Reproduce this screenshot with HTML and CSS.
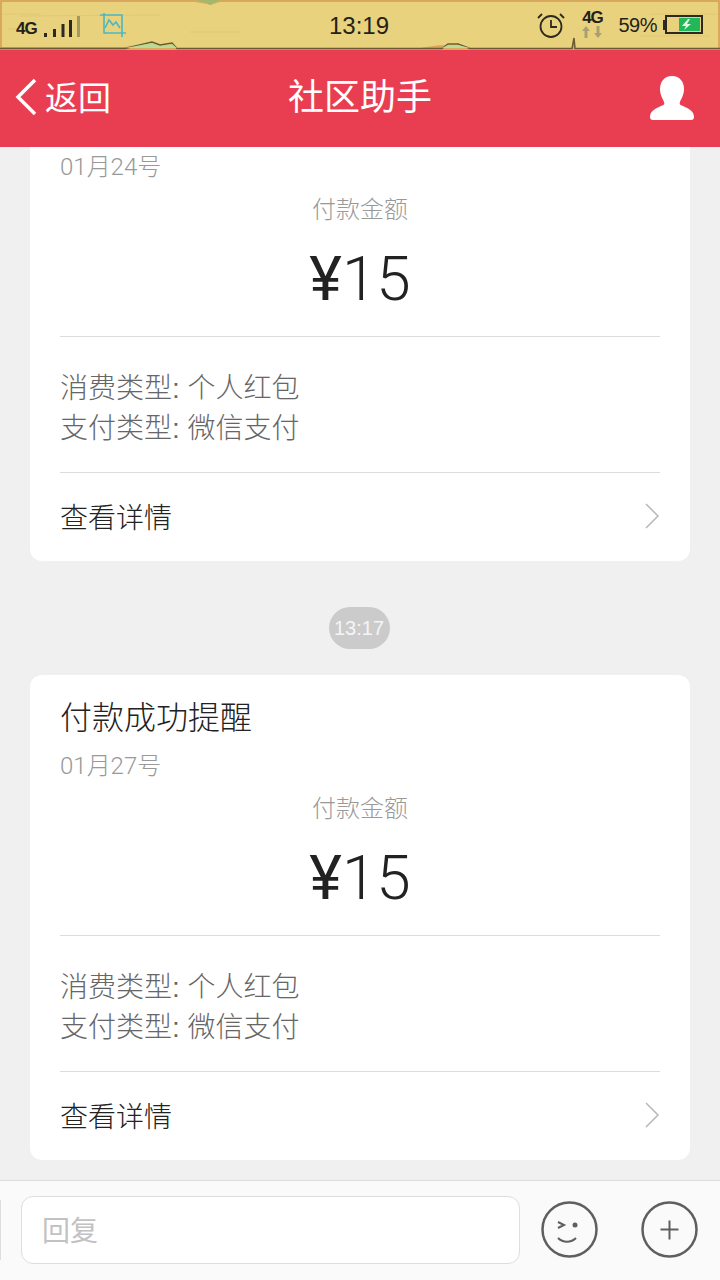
FILE: index.html
```html
<!DOCTYPE html>
<html lang="zh">
<head>
<meta charset="utf-8">
<title>社区助手</title>
<link rel="stylesheet" href="styles.css">
</head>
<body>
<div class="app">
  <div class="status">
    <svg class="wood" width="720" height="50" viewBox="0 0 720 50">
      <rect width="720" height="50" fill="#d9a860"/>
      <path d="M2 2H195L207 4 210 5 220 2H718V48H575L574 38 572 48H470L452 46 440 45 420 48H176L172 43 160 45 152 42 125 47H2Z" fill="#e9d27e"/>
      <path d="M0 48.500H125L152 42 160 45 172 43 177 48.500H442L448 44 458 44 470 48.500H572L574 38 575 48.500H720" fill="none" stroke="#6b5a33" stroke-width="1.500"/>
      <path d="M125 48L152 43 160 46 172 44 177 48ZM442 48L448 45 458 45 470 48Z" fill="#b9dc92"/>
      <path d="M195 0L207 3 210 5 220 0Z" fill="#a3b86b"/>
      <path d="M2 14H40M190 32H240M650 14H718M8 29H20M20 16L160 15M640 36H710" stroke="#d8b36b" stroke-width="1" opacity=".35"/>
    </svg>
    <div class="status-left">
      <span class="net">4G</span>
      <svg class="bars" width="36" height="22" viewBox="0 0 36 22">
        <path d="M0 17h3v4H0zM9 13h3v8H9zM17.500 8h3v13h-3zM25 4h3v17h-3z" fill="#2c2a20"/>
        <path d="M33 0h3v21h-3z" fill="#2c2a20" opacity=".35"/>
      </svg>
      <svg class="shot" width="26" height="24" viewBox="0 0 26 24" fill="none" stroke="#4cb6c4" stroke-width="1.600">
        <path d="M0 2h22v18M4 0v20h22M22 20v4"/>
        <path d="M5 15l4-8 4 5 3-3 4 6"/>
      </svg>
    </div>
    <span class="clock">13:19</span>
    <div class="status-right">
      <svg class="alarm" width="28" height="28" viewBox="0 0 28 28" fill="none" stroke="#2c2a20" stroke-width="1.800">
        <circle cx="14" cy="15.500" r="10.500"/>
        <path d="M14 9v7h6M1 7l4-4M27 7l-4-4"/>
      </svg>
      <div class="net-up">
        <span class="net-label">4G</span>
        <svg width="20" height="12" viewBox="0 0 20 12" fill="#a8a070"><path d="M4 0l4 5H5.500v7h-3V5H0zM16 12l-4-5h2.500V0h3v7H20z"/></svg>
      </div>
      <span class="percent">59%</span>
      <svg width="40" height="20" viewBox="0 0 40 20">
        <rect x="0" y="5" width="2" height="10" fill="#2c2a20"/>
        <rect x="3" y="1" width="36" height="17" fill="none" stroke="#2c2a20" stroke-width="2"/>
        <rect x="16" y="3" width="21" height="13" fill="#22b85a"/>
        <path d="M25 4l-6 7h4l-2 4 7-6h-4l3-5z" fill="#e9f5e0"/>
      </svg>
    </div>
  </div>

  <header class="bar">
    <div class="back">
      <svg class="back-icon" width="24" height="38" viewBox="0 0 24 38" fill="none" stroke="#fff" stroke-width="3.500"><path d="M21 2L4 19l17 17"/></svg>
      <span>返回</span>
    </div>
    <h1 class="title">社区助手</h1>
    <div class="user-slot">
      <svg class="user" width="46" height="46" viewBox="0 0 46 46" fill="#fff">
        <path d="M23 1c8 0 12 6 12 13 0 6-3 10-4 13-1 2 0 3 3 4 7 3 11 6 11 11 0 2-1 3-3 3H4c-2 0-3-1-3-3 0-5 4-8 11-11 3-1 4-2 3-4-1-3-4-7-4-13C11 7 15 1 23 1z"/>
      </svg>
    </div>
  </header>

  <main class="feed">
    <article class="card card-cut">
      <div class="date">01月24号</div>
      <div class="amount-label">付款金额</div>
      <div class="amount"><span class="yen">¥</span>15</div>
      <div class="info">消费类型: 个人红包<br>支付类型: 微信支付</div>
      <div class="more">
        <span>查看详情</span>
        <svg width="16" height="26" viewBox="0 0 16 26" fill="none" stroke="#b8b8b8" stroke-width="1.500"><path d="M2 1l12 12L2 25"/></svg>
      </div>
    </article>

    <div class="time-row"><span class="time">13:17</span></div>

    <article class="card">
      <div class="card-title">付款成功提醒</div>
      <div class="date">01月27号</div>
      <div class="amount-label">付款金额</div>
      <div class="amount"><span class="yen">¥</span>15</div>
      <div class="info">消费类型: 个人红包<br>支付类型: 微信支付</div>
      <div class="more">
        <span>查看详情</span>
        <svg width="16" height="26" viewBox="0 0 16 26" fill="none" stroke="#b8b8b8" stroke-width="1.500"><path d="M2 1l12 12L2 25"/></svg>
      </div>
    </article>
  </main>

  <footer class="reply">
    <span class="sliver"></span>
    <div class="input">回复</div>
    <svg class="round" width="57" height="57" viewBox="0 0 57 57" fill="none" stroke="#5f5f5f" stroke-width="2.500">
      <circle cx="28.500" cy="28.500" r="27"/>
      <path d="M17 21l6 3-6 3" stroke-width="2"/>
      <circle cx="34" cy="24" r="2.500" fill="#5f5f5f" stroke="none"/>
      <path d="M17 37c5 5 13 5 18 0" stroke-width="2.200"/>
    </svg>
    <svg class="round" width="57" height="57" viewBox="0 0 57 57" fill="none" stroke="#5f5f5f" stroke-width="2.500">
      <circle cx="28.500" cy="28.500" r="27"/>
      <path d="M28.500 19.500v19M19.500 28.500h18" stroke-width="2"/>
    </svg>
  </footer>
</div>
</body>
</html>
```
FILE: styles.css
```css
* {
  box-sizing: border-box;
}
html,
body {
  margin: 0;
  padding: 0;
}
body {
  font-family: "Liberation Sans", "Noto Sans CJK SC", sans-serif;
  background: #f0f0f0;
}
.app {
  width: 720px;
  height: 1280px;
  display: flex;
  flex-direction: column;
  overflow: hidden;
}
.status {
  position: relative;
  flex: 0 0 50px;
  display: flex;
  align-items: center;
  padding: 0 17px 0 16px;
  color: #24221a;
}
.wood {
  position: absolute;
  left: 0;
  top: 0;
}
.status-left,
.status-right,
.clock {
  position: relative;
}
.status-left {
  flex: 1 1 0;
  display: flex;
  align-items: center;
}
.net {
  font-size: 17px;
  font-weight: 700;
  letter-spacing: -1px;
  margin-top: 8px;
  width: 28px;
}
.bars {
  margin-top: 3px;
}
.shot {
  margin: 0 0 0 20px;
}
.clock {
  font-size: 24px;
  margin: 2px 0 0 -1px;
}
.status-right {
  flex: 1 1 0;
  display: flex;
  align-items: center;
  justify-content: flex-end;
}
.alarm {
  margin-right: 17px;
}
.net-up {
  display: flex;
  flex-direction: column;
  align-items: center;
  width: 20px;
  margin-top: -2px;
}
.net-label {
  font-size: 17px;
  font-weight: 700;
  letter-spacing: -1px;
  line-height: 16px;
}
.percent {
  font-size: 20px;
  letter-spacing: -0.5px;
  margin: 1px 6px 0 16px;
}
.bar {
  flex: 0 0 97px;
  background: #e93e52;
  color: #fff;
  display: flex;
  align-items: center;
  padding: 0 25px 6px 14px;
}
.back {
  flex: 1 1 0;
  display: flex;
  align-items: center;
  gap: 7px;
  font-size: 33px;
}
.back-icon {
  margin-top: 2px;
}
.title {
  margin: 5px 0 0 11px;
  font-size: 36px;
  line-height: 50px;
  font-weight: 400;
}
.user-slot {
  flex: 1 1 0;
  display: flex;
  justify-content: flex-end;
}
.user {
  display: block;
  margin-top: 5px;
}
.feed {
  flex: 1;
  min-height: 0;
  overflow: hidden;
  padding: 0 30px;
}
.card {
  background: #fff;
  border-radius: 12px;
  height: 485px;
  padding: 0 30px;
  display: flex;
  flex-direction: column;
  font-family: Roboto, "Noto Sans CJK SC", sans-serif;
  font-weight: 300;
}
.card-title {
  font-size: 32px;
  line-height: 40px;
  margin-top: 23px;
  color: #222;
}
.date {
  font-size: 24px;
  line-height: 30px;
  margin-top: 13px;
  color: #999;
}
.card-cut {
  height: 414px;
  border-radius: 0 0 12px 12px;
}
.card-cut .date {
  margin-top: 5px;
}
.amount-label {
  font-size: 24px;
  line-height: 30px;
  margin-top: 13px;
  text-align: center;
  color: #999;
}
.amount {
  font-size: 62px;
  line-height: 70px;
  height: 112px;
  padding-top: 19px;
  text-align: center;
  color: #222;
  border-bottom: 1px solid #dcdcdc;
  flex: none;
}
.yen {
  font-weight: 400;
}
.info {
  font-family: "Liberation Sans", "Noto Sans CJK SC", sans-serif;
  font-size: 28px;
  line-height: 40px;
  height: 136px;
  padding-top: 32px;
  color: #666;
  border-bottom: 1px solid #dcdcdc;
  flex: none;
}
.more {
  flex: 1;
  display: flex;
  align-items: center;
  justify-content: space-between;
  font-size: 28px;
  padding-bottom: 3px;
  color: #222;
}
.time-row {
  height: 114px;
  padding: 46px 2px 0 0;
  display: flex;
  justify-content: center;
  align-items: flex-start;
}
.time {
  width: 61px;
  height: 42px;
  border-radius: 21px;
  background: #cbcbcb;
  color: #f5f5f5;
  font-size: 20px;
  line-height: 42px;
  text-align: center;
}
.reply {
  flex: 0 0 100px;
  background: #fafafa;
  border-top: 1px solid #dcdcdc;
  display: flex;
  align-items: center;
  padding: 0 0 2px;
}
.sliver {
  flex: none;
  width: 1px;
  height: 60px;
  background: #dedede;
  margin-right: 20px;
}
.input {
  flex: none;
  width: 499px;
  height: 68px;
  background: #fff;
  border: 1px solid #dedede;
  border-radius: 12px;
  padding-left: 20px;
  font-size: 28px;
  line-height: 70px;
  color: #c2c2c2;
  margin-right: 21px;
}
.round {
  margin-right: 43px;
  flex: none;
}
.round:last-child {
  margin-right: 0;
}
```
